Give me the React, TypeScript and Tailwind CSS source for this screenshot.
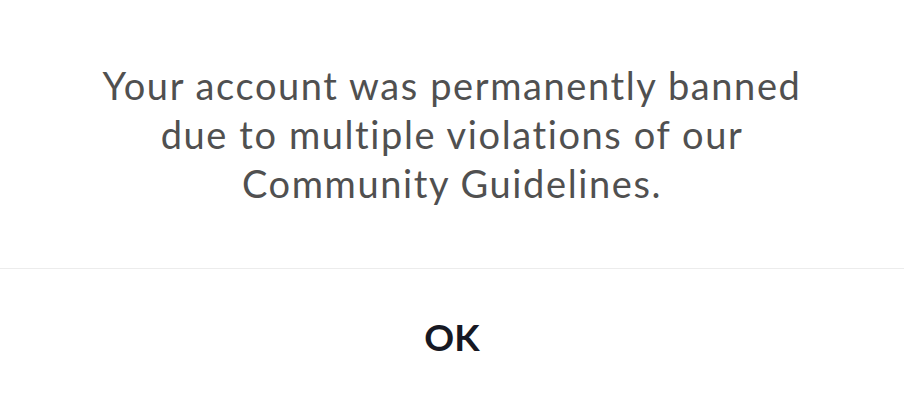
export default function App() {
  return (
    <div className="w-[904px] h-[404px] bg-white flex flex-col" style={{ fontFamily: "Lato, 'Open Sans', sans-serif" }}>
      <div className="h-[268px] flex items-center justify-center px-6">
        <p className="text-center text-[38px] leading-[49px] text-[#505050] tracking-[1.6px]">
          Your account was permanently banned
          <br />
          due to multiple violations of our
          <br />
          Community Guidelines.
        </p>
      </div>
      <div className="h-px bg-[#ececec]" />
      <button className="flex-1 flex items-center justify-center text-[37px] font-bold text-[#161823]">
        OK
      </button>
    </div>
  );
}
